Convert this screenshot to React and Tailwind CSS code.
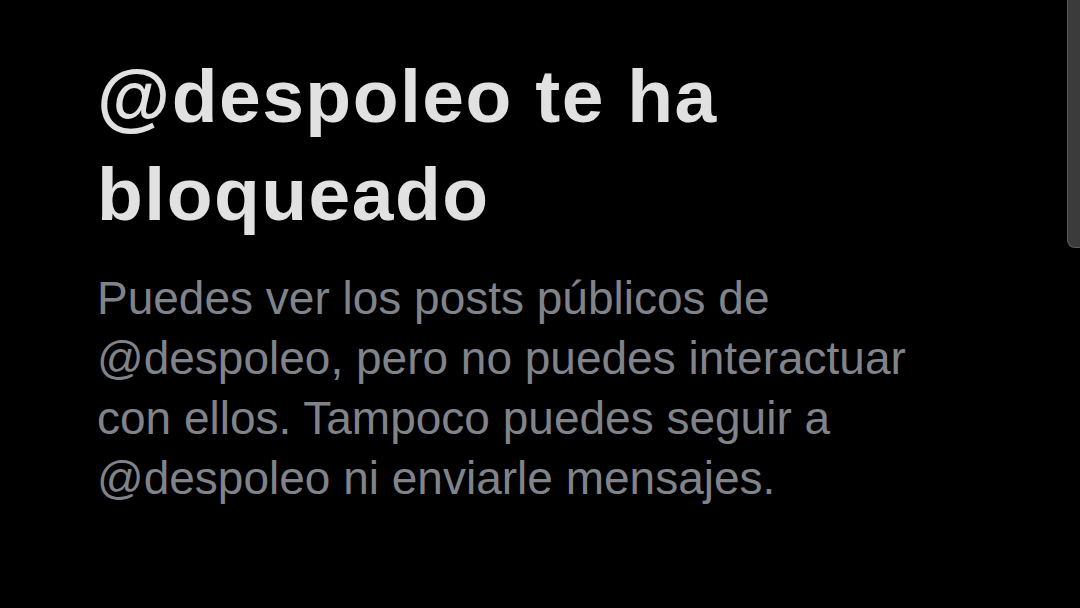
export default function App() {
  return (
    <div className="relative w-[1080px] h-[608px] overflow-hidden bg-black" style={{ fontFamily: '"Liberation Sans", Arial, sans-serif' }}>
      {/* Mensaje de bloqueo */}
      <div className="pl-[97px] pt-[47px] w-[940px]">
        <h1 className="text-[75px] leading-[98px] font-bold tracking-[1.5px] text-[#e1e1e1]">
          @despoleo te ha bloqueado
        </h1>
        <p className="mt-[25px] text-[46px] leading-[60px] text-[#80848a]">
          Puedes ver los posts públicos de @despoleo, pero no puedes interactuar con ellos. Tampoco puedes seguir a @despoleo ni enviarle mensajes.
        </p>
      </div>
      {/* barra de desplazamiento */}
      <div className="absolute top-0 right-0 w-[13px] h-[248px] bg-[#3b3b3b] border-l border-b border-[#5c5c5c] rounded-bl-[8px]" />
    </div>
  );
}
